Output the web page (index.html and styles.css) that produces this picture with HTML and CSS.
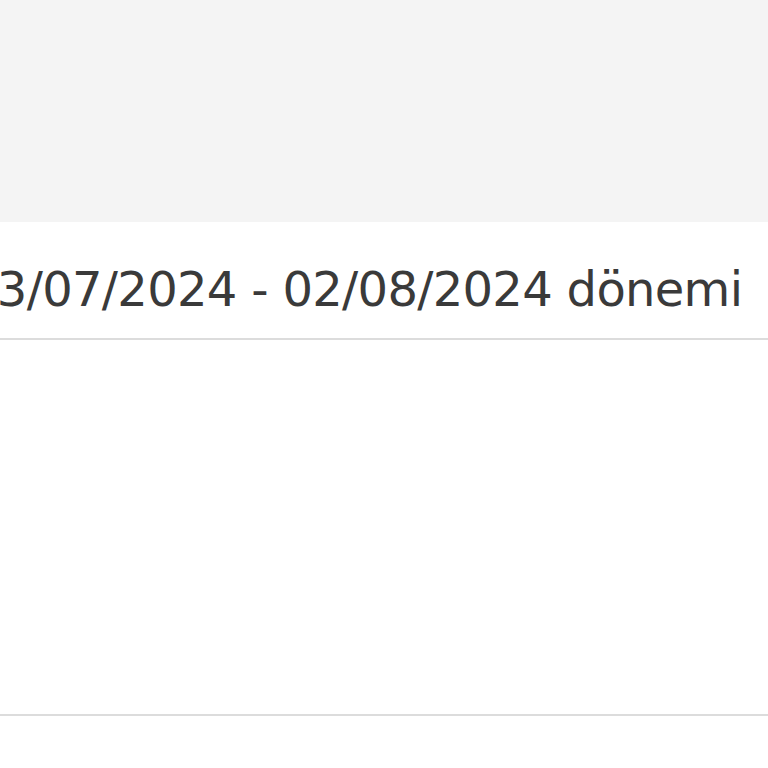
FILE: index.html
```html
<!DOCTYPE html>
<html lang="tr">
<head>
<meta charset="utf-8">
<link rel="stylesheet" href="styles.css">
</head>
<body>
<div class="page">
  <header class="top"></header>
  <div class="period-row"><span class="period">03/07/2024 - 02/08/2024 dönemi</span></div>
  <section class="panel"></section>
  <footer class="rest"></footer>
</div>
</body>
</html>
```
FILE: styles.css
```css
html, body { margin: 0; padding: 0; background: #ffffff; }
.page { width: 768px; height: 768px; overflow: hidden; display: flex; flex-direction: column; font-family: "DejaVu Sans", "Open Sans", sans-serif; }
.top { height: 222px; background: #f4f4f4; flex: none; }
.period-row { height: 118px; border-bottom: 2px solid #dcdcdc; display: flex; align-items: center; padding-top: 18px; box-sizing: border-box; white-space: nowrap; flex: none; }
.period { margin-left: -33px; font-size: 48px; color: #3a3a3a; letter-spacing: -0.7px; }
.panel { height: 376px; border-bottom: 2px solid #dcdcdc; box-sizing: border-box; flex: none; }
.rest { flex: 1; }
```
